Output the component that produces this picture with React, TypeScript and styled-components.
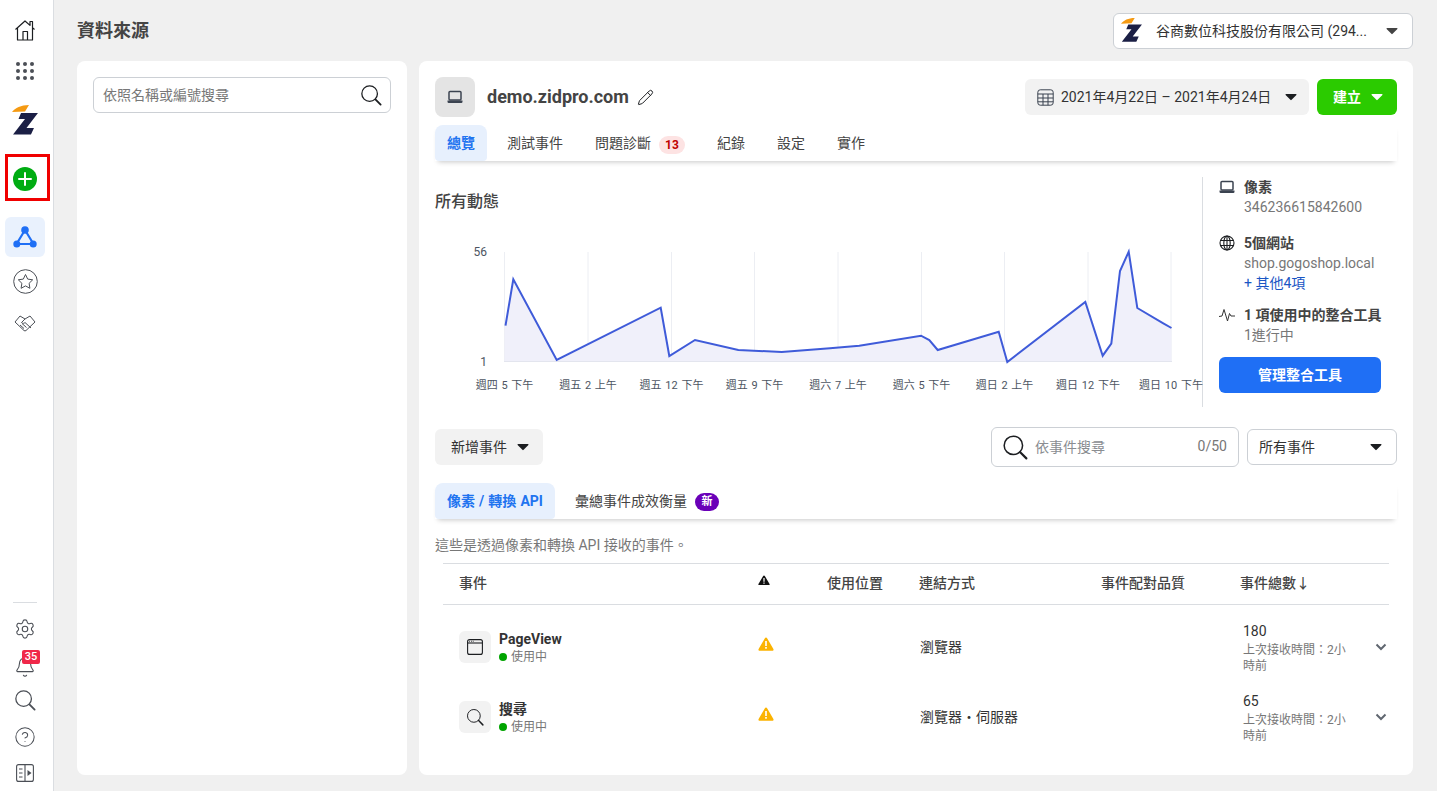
import React from "react";
import styled, { createGlobalStyle } from "styled-components";
import { Settings, Bell, CircleHelp, Pencil } from "lucide-react";

const GlobalStyle = createGlobalStyle`
  * { box-sizing: border-box; }
  html, body { margin: 0; padding: 0; height: 100%; }
  body {
    font-family: Roboto, "Noto Sans CJK TC", sans-serif;
    line-height: 20px;
    color: #333;
    background: #f0f0f0;
    overflow: hidden;
  }
`;

const Page = styled.div`
  display: flex;
  width: 1437px;
  height: 791px;
`;

// Left rail
const Rail = styled.nav`
  width: 54px;
  flex-shrink: 0;
  background: #fff;
  border-right: 1px solid #dadde1;
  display: flex;
  flex-direction: column;
  align-items: flex-start;
  padding: 10px 0 5px;
`;

const RailItem = styled.div<{ $h?: number; $mt?: number }>`
  width: 50px;
  height: ${({ $h }) => $h ?? 40}px;
  margin-top: ${({ $mt }) => $mt ?? 0}px;
  display: flex;
  align-items: center;
  justify-content: center;
  color: #4b4f56;
  flex-shrink: 0;
  position: relative;
`;

const HighlightBox = styled.div`
  width: 45px;
  height: 47px;
  margin: 14px 0 0 5px;
  padding: 10px 0 0 5px;
  border: 3px solid #f00000;
`;

const ActiveTile = styled.div`
  width: 40px;
  height: 40px;
  margin: 16px 0 0 5px;
  border-radius: 6px;
  background: #e9f1fd;
  display: flex;
  align-items: center;
  justify-content: center;
`;

const RailSpacer = styled.div`
  flex: 1;
`;

const RailRule = styled.div`
  width: 24px;
  height: 1px;
  background: #dadde1;
  margin-left: 13px;
`;

const CountBadge = styled.span`
  position: absolute;
  left: 22px;
  top: 2px;
  width: 18px;
  height: 14px;
  background: #f02849;
  border-radius: 2px;
  color: #fff;
  font-size: 11px;
  font-weight: 500;
  line-height: 14px;
  text-align: center;
`;

// Main area
const Main = styled.main`
  flex: 1;
  min-width: 0;
  padding: 0 24px 16px 23px;
  display: flex;
  flex-direction: column;
`;

const Header = styled.header`
  height: 61px;
  flex-shrink: 0;
  display: flex;
  align-items: center;
  justify-content: space-between;
`;

const PageTitle = styled.h1`
  margin: 0;
  font-size: 18px;
  line-height: 24px;
  font-weight: 700;
  color: #444;
`;

const AccountSelect = styled.div`
  width: 300px;
  height: 36px;
  background: #fff;
  border: 1px solid #ccd0d5;
  border-radius: 6px;
  display: flex;
  align-items: center;
  padding: 0 14px 0 7px;
`;

const AccountName = styled.span`
  flex: 1;
  margin-left: 14px;
  font-size: 14px;
  color: #333;
  white-space: nowrap;
`;

const Columns = styled.div`
  flex: 1;
  display: flex;
  gap: 12px;
  min-height: 0;
`;

const Card = styled.section<{ $w: number }>`
  width: ${({ $w }) => $w}px;
  background: #fff;
  border-radius: 8px;
  padding: 16px;
`;

const SearchBox = styled.div`
  height: 36px;
  border: 1px solid #ccd0d5;
  border-radius: 6px;
  padding: 0 8px 0 9px;
  display: flex;
  align-items: center;
  justify-content: space-between;
  font-size: 14px;
  color: #777;
`;

const TopRow = styled.div`
  height: 40px;
  display: flex;
  align-items: center;
`;

const SourceTile = styled.div`
  width: 40px;
  height: 40px;
  border-radius: 8px;
  background: #e4e4e4;
  display: flex;
  align-items: center;
  justify-content: center;
`;

const SourceName = styled.h2`
  margin: 0 8px 0 12px;
  font-size: 18px;
  line-height: 24px;
  font-weight: 700;
  color: #444;
`;

const TopActions = styled.div`
  margin-left: auto;
  display: flex;
  gap: 8px;
`;

const PlainButton = styled.button<{ $w: number; $pl?: number; $pr?: number }>`
  width: ${({ $w }) => $w}px;
  height: 36px;
  border: 0;
  border-radius: 6px;
  background: #f2f2f2;
  color: #333;
  font: inherit;
  font-size: 14px;
  padding: 0 ${({ $pr }) => $pr ?? 14}px 0 ${({ $pl }) => $pl ?? 16}px;
  display: flex;
  align-items: center;
  justify-content: space-between;
`;

const DateIconText = styled.span`
  display: flex;
  align-items: center;
  gap: 7px;
  white-space: nowrap;
`;

const CreateButton = styled(PlainButton)`
  background: #2bcb00;
  color: #fff;
  font-weight: 700;
`;

const TabBar = styled.div<{ $mt: number }>`
  margin-top: ${({ $mt }) => $mt}px;
  height: 36px;
  display: flex;
  gap: 8px;
  background: #fff;
  box-shadow: 0 4px 5px -3px rgba(0, 0, 0, 0.22);
`;

const Tab = styled.div<{ $active?: boolean }>`
  height: 36px;
  padding: 0 12px;
  display: flex;
  align-items: center;
  gap: 8px;
  font-size: 14px;
  word-spacing: 0.6px;
  font-weight: ${({ $active }) => ($active ? 700 : 400)};
  color: ${({ $active }) => ($active ? "#1f74f0" : "#444")};
  background: ${({ $active }) => ($active ? "#e7f0fd" : "transparent")};
  border-radius: 8px 8px 4px 4px;
  white-space: nowrap;
`;

const IssueBadge = styled.span`
  width: 26px;
  height: 18px;
  margin-top: 4px;
  border-radius: 9px;
  background: #fde3e3;
  color: #c00000;
  font-size: 12px;
  font-weight: 700;
  line-height: 18px;
  text-align: center;
`;

const NewBadge = styled.span`
  width: 24px;
  height: 18px;
  margin-top: 2px;
  border-radius: 9px;
  background: #6a00b8;
  color: #fff;
  font-size: 11px;
  font-weight: 700;
  line-height: 18px;
  text-align: center;
`;

const Overview = styled.div`
  margin-top: 16px;
  height: 230px;
  display: flex;
`;

const ChartArea = styled.div`
  width: 768px;
  border-right: 1px solid #dadde1;
  flex-shrink: 0;
`;

const SectionTitle = styled.h3`
  margin: 15px 0 23px;
  height: 20px;
  font-size: 16px;
  line-height: 20px;
  font-weight: 500;
  color: #444;
`;

const ChartSvg = styled.svg`
  display: block;
  overflow: visible;
  text {
    font-family: Roboto, "Noto Sans CJK TC", sans-serif;
    font-size: 11px;
    word-spacing: 1px;
    fill: #4d5562;
  }
  text.value {
    font-size: 12px;
  }
`;

const Facts = styled.aside`
  flex: 1;
  padding-left: 16px;
  width: 178px;
`;

const Fact = styled.div<{ $mb: number }>`
  display: flex;
  gap: 9px;
  margin-bottom: ${({ $mb }) => $mb}px;
  font-size: 14px;
  line-height: 20px;
  white-space: nowrap;
`;

const FactIcon = styled.div`
  width: 16px;
  height: 20px;
  display: flex;
  align-items: center;
  justify-content: center;
  color: #333;
`;

const FactTitle = styled.div`
  font-weight: 700;
  color: #444;
`;

const FactSub = styled.div`
  color: #777;
`;

const FactLink = styled.div`
  color: #1a56c4;
`;

const ManageButton = styled.button`
  width: 162px;
  height: 36px;
  border: 0;
  border-radius: 6px;
  background: #1f6ff5;
  color: #fff;
  font: inherit;
  font-size: 14px;
  font-weight: 700;
`;

const FilterRow = styled.div`
  margin-top: 20px;
  height: 40px;
  display: flex;
  align-items: center;
`;

const EventSearch = styled.div`
  margin-left: auto;
  width: 248px;
  height: 40px;
  border: 1px solid #ccd0d5;
  border-radius: 6px;
  padding: 0 11px 0 10px;
  display: flex;
  align-items: center;
  font-size: 14px;
  color: #8a8d91;
`;

const EventSearchText = styled.span`
  margin-left: 7px;
  flex: 1;
`;

const EventCount = styled.span`
  color: #777;
  margin-bottom: 2px;
`;

const EventSelect = styled.div`
  width: 150px;
  height: 36px;
  margin-left: 8px;
  border: 1px solid #ccd0d5;
  border-radius: 6px;
  padding: 0 14px 0 11px;
  display: flex;
  align-items: center;
  justify-content: space-between;
  font-size: 14px;
  color: #333;
`;

const Description = styled.p`
  margin: 16px 0 8px;
  font-size: 14px;
  line-height: 20px;
  color: #777;
`;

const Table = styled.div`
  margin: 0 8px;
`;

const gridColumns = "299px 69px 92px 182px 139px 114px 1fr";

const HeadRow = styled.div`
  height: 42px;
  padding: 0 0 2px 16px;
  display: grid;
  grid-template-columns: ${gridColumns};
  align-items: center;
  border-top: 1px solid #dadde1;
  border-bottom: 1px solid #dadde1;
  font-size: 14px;
  font-weight: 500;
  color: #444;
`;

const SortLabel = styled.span`
  white-space: nowrap;
`;

const WarnCell = styled.div`
  display: flex;
  margin-bottom: 6px;
`;

const TableBody = styled.div`
  padding-top: 7px;
`;

const Row = styled.div`
  height: 70px;
  padding-left: 16px;
  display: grid;
  grid-template-columns: ${gridColumns};
  align-items: center;
  font-size: 14px;
  color: #333;
`;

const EventCell = styled.div`
  display: flex;
  align-items: center;
  gap: 8px;
`;

const EventTile = styled.div`
  width: 32px;
  height: 32px;
  border-radius: 6px;
  background: #f2f2f2;
  display: flex;
  align-items: center;
  justify-content: center;
`;

const EventName = styled.div`
  padding-top: 1px;
  font-size: 14px;
  line-height: 17px;
  font-weight: 700;
  color: #333;
`;

const EventStatus = styled.div`
  display: flex;
  align-items: center;
  gap: 4px;
  margin-top: 1px;
  font-size: 12px;
  line-height: 16px;
  color: #777;
`;

const StatusDot = styled.span`
  width: 8px;
  height: 8px;
  border-radius: 50%;
  background: #00a400;
`;

const ViaCell = styled.span`
  padding-left: 1px;
`;

const TotalCell = styled.div`
  padding: 2px 0 0 3px;
`;

const Total = styled.div`
  line-height: 17px;
  margin-bottom: 2px;
`;

const TotalHint = styled.div`
  font-size: 12px;
  line-height: 16px;
  color: #777;
`;

const Expander = styled.div`
  display: flex;
  justify-content: flex-end;
  padding-right: 2px;
`;

const Caret = ({ color = "#333" }: { color?: string }) => (
  <svg width="12" height="8" viewBox="0 0 12 8" style={{ flexShrink: 0 }}>
    <path d="M1 1h10a.6.6 0 0 1 .4 1L6.6 6.8a.8.8 0 0 1-1.2 0L.6 2A.6.6 0 0 1 1 1z" fill={color} />
  </svg>
);

const Magnifier = ({ size = 22, color = "#1c1e21", sw = 1.4 }: { size?: number; color?: string; sw?: number }) => (
  <svg width={size} height={size} viewBox="0 0 24 24" fill="none" stroke={color} strokeWidth={sw}>
    <circle cx="10.5" cy="10.5" r="8.5" />
    <path d="M16.8 16.8l5.7 5.7" strokeWidth={sw + 0.6} strokeLinecap="round" />
  </svg>
);

const ZLogo = ({ size = 26 }: { size?: number }) => (
  <svg width={size} height={size * 1.15} viewBox="0 0 26 30">
    <path d="M0 7C3 3 9 0 17 0l-4 6.5z" fill="#f59a12" />
    <path d="M9 8h17L14.5 23H22l-3 6.5H1L13 14H6.5z" fill="#1b1f45" />
  </svg>
);

const LaptopIcon = ({ size = 16, color = "#3b4350" }: { size?: number; color?: string }) => (
  <svg width={size} height={size} viewBox="0 0 16 16" fill="none">
    <rect x="2" y="2.5" width="12" height="8.5" rx="1" stroke={color} strokeWidth="1.5" />
    <path d="M.5 11.5h15v1.3a1.2 1.2 0 0 1-1.2 1.2H1.700a1.2 1.2 0 0 1-1.2-1.2z" fill={color} />
  </svg>
);

const WarnIcon = ({ size = 16, color = "#fbb300" }: { size?: number; color?: string }) => (
  <svg width={size} height={size * 0.875} viewBox="0 0 16 14">
    <path d="M8 .5c.5 0 .9.3 1.1.7l6.3 10.9c.4.8-.1 1.6-1 1.6H1.600c-.9 0-1.4-.8-1-1.6L6.900 1.200C7.100.8 7.500.5 8 .5z" fill={color} />
    <rect x="7.2" y="4" width="1.6" height="5" fill="#fff" />
    <rect x="7.2" y="10" width="1.6" height="1.7" fill="#fff" />
  </svg>
);

const ChartPoints: [number, number][] = [
  [505.5, 325.7], [513.3, 279.3], [556.7, 360], [660.7, 307.7], [669.3, 356], [695, 340],
  [738.3, 350], [781.7, 352], [830, 348.3], [859.3, 345.7], [921, 335.7], [929.3, 340],
  [937.7, 350], [998.7, 331.7], [1007.3, 362], [1085.3, 302], [1102.7, 355.7], [1111.3, 343.7],
  [1120, 271], [1128.7, 251.7], [1137.3, 308], [1163.3, 323.3], [1171.5, 328],
];

const ChartTicks = [
  { x: 504.5, label: "週四 5 下午" },
  { x: 588, label: "週五 2 上午" },
  { x: 671.5, label: "週五 12 下午" },
  { x: 754.5, label: "週五 9 下午" },
  { x: 838, label: "週六 7 上午" },
  { x: 921.5, label: "週六 5 下午" },
  { x: 1004.5, label: "週日 2 上午" },
  { x: 1088, label: "週日 12 下午" },
  { x: 1171, label: "週日 10 下午" },
];

const ActivityChart = () => {
  const line = ChartPoints.map((p) => p.join(",")).join(" ");
  return (
    <ChartSvg width="767" height="165" viewBox="435 235 767 165">
      {ChartTicks.map((t) => (
        <line key={t.x} x1={t.x} x2={t.x} y1="252" y2="362" stroke="#eceef3" />
      ))}
      <polygon points={`504.5,362 504.5,328 ${line} 1171.5,362`} fill="#f0f0fa" />
      <line x1="504" x2="1172" y1="361.5" y2="361.5" stroke="#e3e5ee" />
      <polyline points={line} fill="none" stroke="#3f5bd9" strokeWidth="2" />
      <text className="value" x="487" y="256" textAnchor="end">56</text>
      <text className="value" x="487" y="366" textAnchor="end">1</text>
      {ChartTicks.map((t) => (
        <text key={t.label} x={t.x} y="389" textAnchor="middle">{t.label}</text>
      ))}
    </ChartSvg>
  );
};

const events = [
  { name: "PageView", icon: "window", via: "瀏覽器", total: "180" },
  { name: "搜尋", icon: "search", via: "瀏覽器・伺服器", total: "65" },
];

export default function App() {
  return (
    <Page>
      <GlobalStyle />
      <Rail>
        <RailItem>
          <svg width="24" height="24" viewBox="0 0 24 24" fill="none" stroke="#1c1e21" strokeWidth="1.2" strokeLinejoin="round">
            <path d="M2.5 11.5L12 3l5 4.4V3.500h2.500v6.200l2 1.800" />
            <path d="M4.5 10v12h15V10" />
            <path d="M10 22v-8.500h4.500V22" />
          </svg>
        </RailItem>
        <RailItem $mt={1}>
          <svg width="18" height="18" viewBox="0 0 18 18" fill="#4b4f56">
            {[2, 9, 16].flatMap((y) =>
              [2, 9, 16].map((x) => <circle key={`${x}-${y}`} cx={x} cy={y} r="2" />)
            )}
          </svg>
        </RailItem>
        <RailItem $mt={9}>
          <ZLogo />
        </RailItem>
        <HighlightBox>
          <svg width="24" height="24" viewBox="0 0 24 24" style={{ display: "block" }}>
            <circle cx="12" cy="12" r="12" fill="#00ac12" />
            <path d="M12 6v12M6 12h12" stroke="#fff" strokeWidth="2" strokeLinecap="round" />
          </svg>
        </HighlightBox>
        <ActiveTile>
          <svg width="24" height="22" viewBox="0 0 24 22" fill="none">
            <path d="M12 4L3.5 18h17z" stroke="#1f6ff5" strokeWidth="2.2" strokeLinejoin="round" />
            <circle cx="12" cy="4" r="3.8" fill="#1f6ff5" />
            <circle cx="3.8" cy="18" r="3.5" fill="#1f6ff5" />
            <circle cx="20.2" cy="18" r="3.5" fill="#1f6ff5" />
          </svg>
        </ActiveTile>
        <RailItem $mt={4}>
          <svg width="25" height="25" viewBox="0 0 25 25" fill="none" stroke="#4b4f56" strokeWidth="1">
            <circle cx="12.5" cy="12.5" r="11.8" />
            <path d="M12.5 5.500l2.200 4.600 5 .7-3.600 3.500.8 5-4.400-2.400-4.400 2.400.8-5-3.600-3.500 5-.7z" strokeLinejoin="round" />
          </svg>
        </RailItem>
        <RailItem $mt={2}>
          <svg width="22" height="18" viewBox="0 0 22 18" fill="none" stroke="#4b4f56" strokeWidth="1" strokeLinejoin="round">
            <path d="M1 8l5-6 5 3 5-3 5 6-9 8.500a1.500 1.500 0 0 1-2 0z" />
            <path d="M11 5L7.500 8.500c1.200 1.200 2.600 1 3.500 0l6 5.500" />
            <path d="M6 11l4 3.500M8 9.500l4.500 4" />
          </svg>
        </RailItem>
        <RailSpacer />
        <RailRule />
        <RailItem $h={38} $mt={7}>
          <Settings size={22} strokeWidth={1.2} />
        </RailItem>
        <RailItem $h={38}>
          <Bell size={22} strokeWidth={1.2} />
          <CountBadge>35</CountBadge>
        </RailItem>
        <RailItem $h={28}>
          <Magnifier color="#4b4f56" />
        </RailItem>
        <RailItem $h={46}>
          <CircleHelp size={22} strokeWidth={1.1} />
        </RailItem>
        <RailItem $h={26}>
          <svg width="18" height="18" viewBox="0 0 18 18" fill="none" stroke="#4b4f56" strokeWidth="1.1">
            <rect x=".6" y=".6" width="16.8" height="16.8" rx="2" />
            <path d="M9 .6v16.800M3 5h3.500M3 9h3.500M3 13h3.500" />
            <path d="M11.500 6l4 3-4 3z" fill="#4b4f56" stroke="none" />
          </svg>
        </RailItem>
      </Rail>

      <Main>
        <Header>
          <PageTitle>資料來源</PageTitle>
          <AccountSelect>
            <ZLogo size={21} />
            <AccountName>谷商數位科技股份有限公司 (294...</AccountName>
            <Caret color="#444" />
          </AccountSelect>
        </Header>

        <Columns>
          <Card $w={330}>
            <SearchBox>
              依照名稱或編號搜尋
              <Magnifier />
            </SearchBox>
          </Card>

          <Card $w={994}>
            <TopRow>
              <SourceTile>
                <LaptopIcon />
              </SourceTile>
              <SourceName>demo.zidpro.com</SourceName>
              <Pencil size={17} strokeWidth={1.4} color="#1c1e21" />
              <TopActions>
                <PlainButton $w={284} $pl={12} $pr={12}>
                  <DateIconText>
                    <svg width="17" height="17" viewBox="0 0 17 17" fill="none" stroke="#3b4350" strokeWidth="1">
                      <rect x=".8" y=".8" width="15.4" height="15.4" rx="2.5" />
                      <path d="M.8 5h15.400M.8 9h15.400M.8 12.800h15.400M6 5v11.200M11 5v11.200" />
                    </svg>
                    2021年4月22日 – 2021年4月24日
                  </DateIconText>
                  <Caret color="#1c1e21" />
                </PlainButton>
                <CreateButton $w={80}>
                  建立
                  <Caret color="#fff" />
                </CreateButton>
              </TopActions>
            </TopRow>

            <TabBar $mt={8}>
              <Tab $active>總覽</Tab>
              <Tab>測試事件</Tab>
              <Tab>問題診斷<IssueBadge>13</IssueBadge></Tab>
              <Tab>紀錄</Tab>
              <Tab>設定</Tab>
              <Tab>實作</Tab>
            </TabBar>

            <Overview>
              <ChartArea>
                <SectionTitle>所有動態</SectionTitle>
                <ActivityChart />
              </ChartArea>
              <Facts>
                <Fact $mb={16}>
                  <FactIcon><LaptopIcon /></FactIcon>
                  <div>
                    <FactTitle>像素</FactTitle>
                    <FactSub>346236615842600</FactSub>
                  </div>
                </Fact>
                <Fact $mb={12}>
                  <FactIcon>
                    <svg width="16" height="16" viewBox="0 0 16 16" fill="none" stroke="#1c1e21" strokeWidth="1.1">
                      <circle cx="8" cy="8" r="7" />
                      <ellipse cx="8" cy="8" rx="3.2" ry="7" />
                      <path d="M8 1v14M1.500 5.500h13M1.500 10.500h13" />
                    </svg>
                  </FactIcon>
                  <div>
                    <FactTitle>5個網站</FactTitle>
                    <FactSub>shop.gogoshop.local</FactSub>
                    <FactLink>+ 其他4項</FactLink>
                  </div>
                </Fact>
                <Fact $mb={12}>
                  <FactIcon>
                    <svg width="16" height="14" viewBox="0 0 16 14" fill="none" stroke="#333" strokeWidth="1">
                      <path d="M0 8.500L3 8l2-6.500L8.500 13l2-7.500L12 8h4" strokeLinejoin="round" />
                    </svg>
                  </FactIcon>
                  <div>
                    <FactTitle>1 項使用中的整合工具</FactTitle>
                    <FactSub>1進行中</FactSub>
                  </div>
                </Fact>
                <ManageButton>管理整合工具</ManageButton>
              </Facts>
            </Overview>

            <FilterRow>
              <PlainButton $w={108}>
                新增事件
                <Caret color="#1c1e21" />
              </PlainButton>
              <EventSearch>
                <Magnifier size={26} />
                <EventSearchText>依事件搜尋</EventSearchText>
                <EventCount>0/50</EventCount>
              </EventSearch>
              <EventSelect>
                所有事件
                <Caret color="#1c1e21" />
              </EventSelect>
            </FilterRow>

            <TabBar $mt={16}>
              <Tab $active>像素 / 轉換 API</Tab>
              <Tab>彙總事件成效衡量<NewBadge>新</NewBadge></Tab>
            </TabBar>

            <Description>這些是透過像素和轉換 API 接收的事件。</Description>

            <Table>
              <HeadRow>
                <span>事件</span>
                <WarnCell>
                  <WarnIcon size={12} color="#111" />
                </WarnCell>
                <span>使用位置</span>
                <span>連結方式</span>
                <span>事件配對品質</span>
                <SortLabel>事件總數↓</SortLabel>
              </HeadRow>
              <TableBody>
                {events.map((ev) => (
                  <Row key={ev.name}>
                    <EventCell>
                      <EventTile>
                        {ev.icon === "window" ? (
                          <svg width="16" height="16" viewBox="0 0 16 16" fill="none" stroke="#1c1e21" strokeWidth="1.1">
                            <rect x=".6" y=".6" width="14.8" height="14.8" rx="2" />
                            <path d="M.6 4h14.800" />
                            <path d="M2.200 2.300h.8M4 2.300h.8M5.800 2.300h.8" />
                          </svg>
                        ) : (
                          <Magnifier size={18} sw={1.3} />
                        )}
                      </EventTile>
                      <div>
                        <EventName>{ev.name}</EventName>
                        <EventStatus>
                          <StatusDot />
                          使用中
                        </EventStatus>
                      </div>
                    </EventCell>
                    <WarnCell>
                      <WarnIcon />
                    </WarnCell>
                    <span />
                    <ViaCell>{ev.via}</ViaCell>
                    <span />
                    <TotalCell>
                      <Total>{ev.total}</Total>
                      <TotalHint>上次接收時間：2小時前</TotalHint>
                    </TotalCell>
                    <Expander>
                      <svg width="12" height="8" viewBox="0 0 12 8" fill="none" stroke="#606770" strokeWidth="2">
                        <path d="M1.500 1.500L6 6l4.500-4.500" />
                      </svg>
                    </Expander>
                  </Row>
                ))}
              </TableBody>
            </Table>
          </Card>
        </Columns>
      </Main>
    </Page>
  );
}
